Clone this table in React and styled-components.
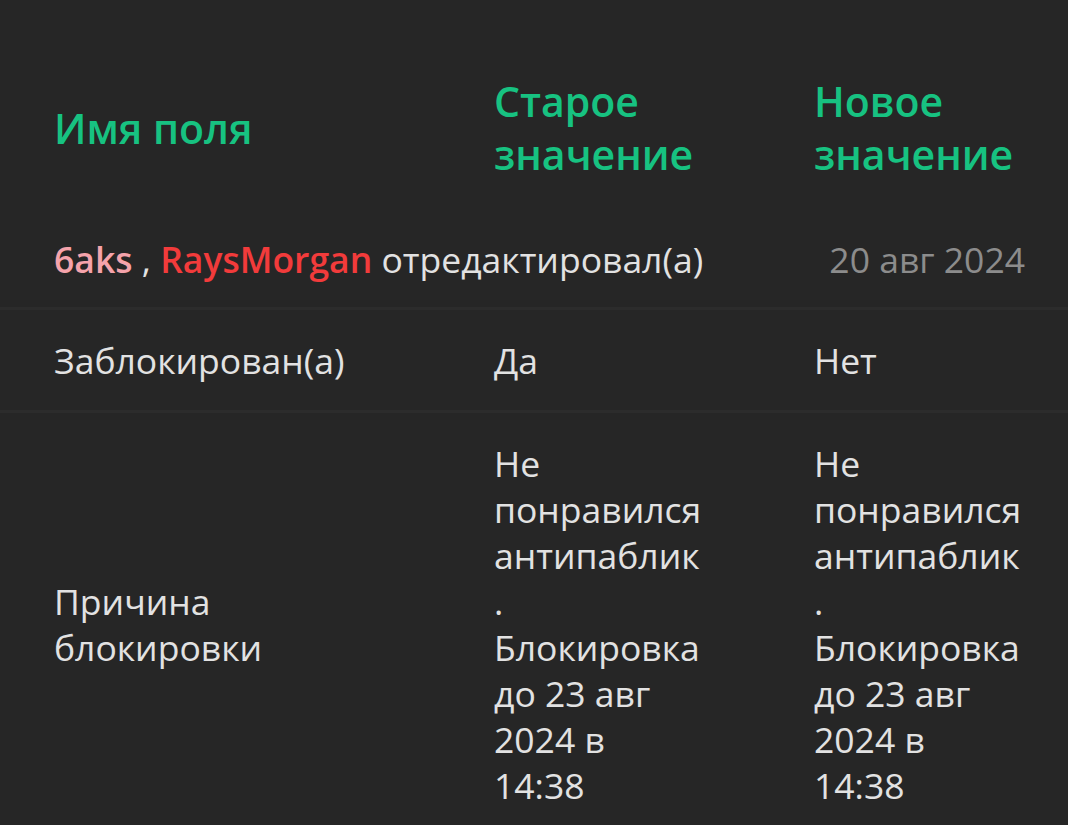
import React from "react";
import styled, { createGlobalStyle } from "styled-components";

const Global = createGlobalStyle`
  html, body {
    margin: 0;
    padding: 0;
    background: #262626;
  }
  body {
    font-family: "Open Sans", "Noto Sans", sans-serif;
    color: #e4e4e4;
  }
`;

const Page = styled.div`
  padding-top: 48px;
  min-height: 825px;
  box-sizing: border-box;
  background: #262626;
`;

const Row = styled.div`
  display: grid;
  grid-template-columns: 440px 320px 1fr;
  align-items: center;
  padding: 27px 43px 27px 54px;
  border-top: ${(p) => (p.$line ? "3px solid #2c2c2c" : "none")};
`;

const HeadCell = styled.div`
  color: #17c281;
  font-size: 41px;
  font-weight: 600;
  line-height: 53px;
  max-width: 230px;
`;

const Cell = styled.div`
  font-size: 35.5px;
  line-height: 46px;
  color: #e2e2e2;
  max-width: ${(p) => (p.$value ? "210px" : "320px")};
  overflow-wrap: break-word;
`;

const EditRow = styled.div`
  display: flex;
  justify-content: space-between;
  align-items: center;
  font-size: 35.5px;
  line-height: 46px;
  padding: 28px 43px 25px 54px;
`;

const Who = styled.div`
  color: #e2e2e2;
`;

const Name = styled.span`
  color: ${(p) => p.$color};
  font-weight: 600;
`;

const DateText = styled.div`
  color: #8c8c8c;
`;

export default function App() {
  return (
    <>
      <Global />
      <Page>
        <Row>
          <HeadCell>Имя поля</HeadCell>
          <HeadCell>Старое значение</HeadCell>
          <HeadCell>Новое значение</HeadCell>
        </Row>
        <EditRow>
          <Who>
            <Name $color="#f5a3ab">6aks</Name> ,{" "}
            <Name $color="#f23b3b">RaysMorgan</Name> отредактировал(а)
          </Who>
          <DateText>20 авг 2024</DateText>
        </EditRow>
        <Row $line>
          <Cell>Заблокирован(а)</Cell>
          <Cell $value>Да</Cell>
          <Cell $value>Нет</Cell>
        </Row>
        <Row $line>
          <Cell>Причина блокировки</Cell>
          <Cell $value>Не понравился антипаблик. Блокировка до 23 авг 2024 в 14:38</Cell>
          <Cell $value>Не понравился антипаблик. Блокировка до 23 авг 2024 в 14:38</Cell>
        </Row>
      </Page>
    </>
  );
}
